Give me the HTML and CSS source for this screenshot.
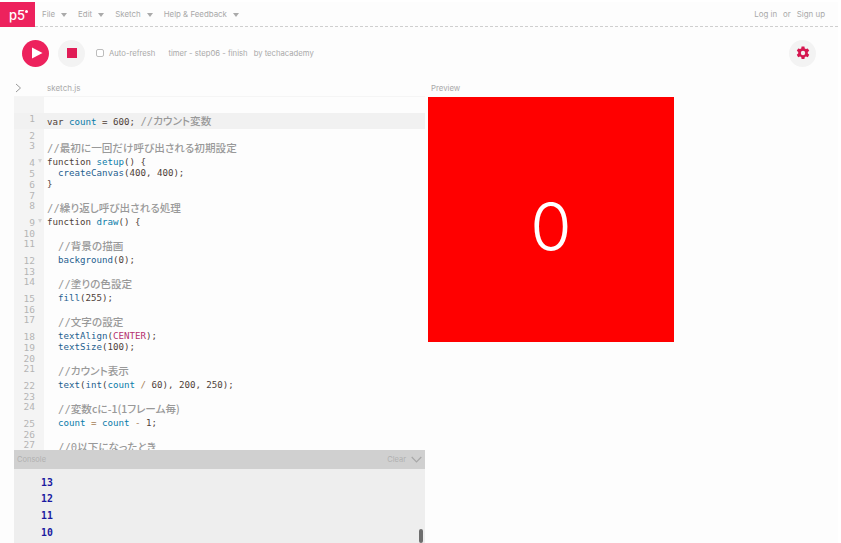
FILE: index.html
```html
<!DOCTYPE html>
<html lang="ja">
<head>
<meta charset="utf-8">
<title>p5.js Web Editor</title>
<link rel="stylesheet" href="styles.css">
</head>
<body>
<div class="page">
  <header class="nav">
    <div class="logo">p5<span class="logo-star"></span></div>
    <ul class="menu">
      <li class="menu-item">File<span class="caret"></span></li>
      <li class="menu-item">Edit<span class="caret"></span></li>
      <li class="menu-item">Sketch<span class="caret"></span></li>
      <li class="menu-item">Help &amp; Feedback<span class="caret"></span></li>
    </ul>
    <div class="auth"><span>Log in</span><span>or</span><span>Sign up</span></div>
  </header>

  <section class="toolbar">
    <button class="play" aria-label="Play">
      <svg width="12" height="12" viewBox="0 0 12 12"><path d="M1 .5 11.500 6 1 11.500z" fill="#fff"/></svg>
    </button>
    <button class="stop" aria-label="Stop"><span class="stop-mark"></span></button>
    <label class="auto"><span class="check"></span>Auto-refresh</label>
    <span class="sketch-name">timer - step06 - finish</span>
    <span class="owner">by techacademy</span>
    <button class="settings" aria-label="Settings">
      <svg width="14" height="14" viewBox="0 0 14 14"><path d="M5.600.6h2.800l.4 1.900 1.200.6 1.800-.7 1.400 2.400-1.400 1.300v1.400l1.400 1.300-1.400 2.400-1.800-.7-1.200.6-.4 1.900H5.600l-.4-1.900-1.200-.6-1.800.7L.8 8.800l1.400-1.300V6.100L.8 4.800l1.400-2.400 1.800.7 1.200-.6z" fill="#d5164f"/><circle cx="7" cy="7" r="2.200" fill="#f3f3f3"/></svg>
    </button>
  </section>

  <main class="main">
    <div class="editor-col">
      <div class="tabs">
        <svg class="expand" width="7" height="10" viewBox="0 0 7 10"><path d="M1 1l4.500 4L1 9" fill="none" stroke="#9a9a9a" stroke-width="1"/></svg>
        <span class="file-name">sketch.js</span>
      </div>
      <div class="code-wrap">
        <div class="code">
          <div class="row tall active"><span class="num">1</span><code class="src">var <i class="v">count</i> = 600; <i class="c">//カウント変数</i></code></div>
          <div class="row"><span class="num">2</span><code class="src"></code></div>
          <div class="row tall"><span class="num">3</span><code class="src"><i class="c">//最初に一回だけ呼び出される初期設定</i></code></div>
          <div class="row"><span class="num fold">4</span><code class="src">function <i class="v">setup</i>() {</code></div>
          <div class="row"><span class="num">5</span><code class="src">  <i class="f">createCanvas</i>(400, 400);</code></div>
          <div class="row"><span class="num">6</span><code class="src">}</code></div>
          <div class="row"><span class="num">7</span><code class="src"></code></div>
          <div class="row tall"><span class="num">8</span><code class="src"><i class="c">//繰り返し呼び出される処理</i></code></div>
          <div class="row"><span class="num fold">9</span><code class="src">function <i class="v">draw</i>() {</code></div>
          <div class="row"><span class="num">10</span><code class="src"></code></div>
          <div class="row tall"><span class="num">11</span><code class="src">  <i class="c">//背景の描画</i></code></div>
          <div class="row"><span class="num">12</span><code class="src">  <i class="f">background</i>(0);</code></div>
          <div class="row"><span class="num">13</span><code class="src"></code></div>
          <div class="row tall"><span class="num">14</span><code class="src">  <i class="c">//塗りの色設定</i></code></div>
          <div class="row"><span class="num">15</span><code class="src">  <i class="f">fill</i>(255);</code></div>
          <div class="row"><span class="num">16</span><code class="src"></code></div>
          <div class="row tall"><span class="num">17</span><code class="src">  <i class="c">//文字の設定</i></code></div>
          <div class="row"><span class="num">18</span><code class="src">  <i class="f">textAlign</i>(<i class="k">CENTER</i>);</code></div>
          <div class="row"><span class="num">19</span><code class="src">  <i class="f">textSize</i>(100);</code></div>
          <div class="row"><span class="num">20</span><code class="src"></code></div>
          <div class="row tall"><span class="num">21</span><code class="src">  <i class="c">//カウント表示</i></code></div>
          <div class="row"><span class="num">22</span><code class="src">  <i class="f">text</i>(<i class="f">int</i>(<i class="v">count</i> <i class="o">/</i> 60), 200, 250);</code></div>
          <div class="row"><span class="num">23</span><code class="src"></code></div>
          <div class="row tall"><span class="num">24</span><code class="src">  <i class="c">//<i class="prop">変数cに-1(1フレーム毎)</i></i></code></div>
          <div class="row"><span class="num">25</span><code class="src">  <i class="v">count</i> <i class="o">=</i> <i class="v">count</i> <i class="o">-</i> 1;</code></div>
          <div class="row"><span class="num">26</span><code class="src"></code></div>
          <div class="row tall"><span class="num">27</span><code class="src">  <i class="c">//0以下になったとき</i></code></div>
        </div>
      </div>
      <div class="console">
        <div class="console-head">
          <span>Console</span>
          <span class="console-actions">Clear
            <svg width="11" height="7" viewBox="0 0 11 7"><path d="M.7 1l4.800 4.800L10.300 1" fill="none" stroke="#a8a8a8" stroke-width="1.200"/></svg>
          </span>
        </div>
        <div class="console-body">
          <div class="log-list">
            <div class="log">14</div>
            <div class="log">13</div>
            <div class="log">12</div>
            <div class="log">11</div>
            <div class="log">10</div>
          </div>
          <span class="scroll-thumb"></span>
        </div>
      </div>
    </div>
    <div class="preview-col">
      <div class="preview-label">Preview</div>
      <div class="canvas">0</div>
    </div>
  </main>
</div>
</body>
</html>
```

FILE: styles.css
```css
* { box-sizing: border-box; }
html, body { margin: 0; height: 100%; overflow: hidden; }
body { background: #fff; font-family: "Inter", "Noto Sans", sans-serif; color: #a9a9a9; }
.page { width: 838px; height: 541px; margin-top: 2px; background: #fdfdfd; display: flex; flex-direction: column; overflow: hidden; }
button { border: 0; padding: 0; cursor: pointer; }

.nav { height: 25px; flex: none; display: flex; align-items: center; border-bottom: 1px dashed #cfcfcf; font-size: 7.900px; }
.logo { width: 35px; height: 25px; background: #ed225d; color: #fff; font-size: 13px; font-weight: 500; padding-left: 9px; line-height: 27px; flex: none; position: relative; }
.logo-star { position: absolute; left: 25px; top: 8px; width: 3px; height: 3px; border-radius: 50%; background: #fff; }
.menu { list-style: none; display: flex; margin: 0 0 0 7px; padding: 0; gap: 11px; flex: 1; }
.menu-item { display: flex; align-items: center; gap: 6px; }
.caret { width: 0; height: 0; border-left: 3px solid transparent; border-right: 3px solid transparent; border-top: 4px solid #aaa; margin-top: 1px; }
.auth { display: flex; gap: 6px; padding-right: 13px; }

.toolbar { height: 52px; flex: none; display: flex; align-items: center; padding: 0 22px; font-size: 7.700px; }
.play { width: 27px; height: 27px; border-radius: 50%; background: #ed225d; display: flex; align-items: center; justify-content: center; padding-left: 2px; }
.stop { width: 27px; height: 27px; border-radius: 50%; background: #f3f3f3; display: flex; align-items: center; justify-content: center; margin-left: 9px; }
.stop-mark { width: 10px; height: 10px; background: #e01c56; }
.auto { display: flex; align-items: center; gap: 5px; margin-left: 11px; }
.check { width: 8px; height: 8px; border: 1px solid #bdbdbd; border-radius: 2px; background: #fff; }
.sketch-name { margin-left: 13px; }
.owner { margin-left: 6px; }
.settings { width: 27px; height: 27px; border-radius: 50%; background: #f3f3f3; display: flex; align-items: center; justify-content: center; margin-left: auto; }

.main { flex: 1; min-height: 0; display: flex; }
.editor-col { width: 425px; flex: none; display: flex; flex-direction: column; padding-left: 14px; }
.tabs { height: 18px; flex: none; display: flex; align-items: center; border-bottom: 1px solid #f5f5f5; font-size: 8px; }
.expand { margin-left: 1px; }
.file-name { margin-left: 25px; }
.code-wrap { height: 353px; flex: none; overflow: hidden; background: linear-gradient(90deg, #f4f4f4 30px, #fdfdfd 30px); padding-top: 16px; }
.row { display: flex; height: 11px; font: 9.150px/11px "DejaVu Sans Mono", monospace; color: #4f3f38; }
.row.tall { height: 16px; line-height: 16px; }
.row.active { background: #f1f1f1; }
.num { width: 33px; flex: none; padding-top: 1px; padding-right: 12px; text-align: right; color: #b4b4b4; font-size: 9.500px; line-height: 11px; position: relative; }
.tall .num { padding-top: 0; }
.fold::after { content: ""; position: absolute; left: 24px; top: 3px; border-left: 2.500px solid transparent; border-right: 2.500px solid transparent; border-top: 4px solid #d5d5d5; }
.src { font: inherit; white-space: pre; padding-top: 1px; }
.tall .src { padding-top: 0; }
.src i { font-style: normal; }
.v { color: #0b7ca9; }
.f { color: #1f5f8f; }
.k { color: #b5316e; }
.o { color: #a67f59; }
.c { color: #999999; font-family: "DejaVu Sans Mono", "Noto Sans CJK JP", monospace; font-size: 10.600px; font-weight: 500; font-feature-settings: "palt"; }
.prop { font-family: "Noto Sans CJK JP", sans-serif; }

.console { flex: 1; min-height: 0; display: flex; flex-direction: column; }
.console-head { height: 19px; flex: none; background: #d0d0d0; display: flex; justify-content: space-between; align-items: center; padding: 0 3px; font-size: 7.500px; color: #b0b0b0; }
.console-actions { display: flex; align-items: center; gap: 5px; }
.console-body { flex: 1; min-height: 0; background: #eeeeee; position: relative; overflow: hidden; }
.log-list { margin-top: -11px; }
.log { height: 16.700px; padding-left: 27px; font: bold 9.800px/16.700px "DejaVu Sans Mono", monospace; color: #1a1aa0; }
.scroll-thumb { position: absolute; right: 2px; bottom: 0; width: 4px; height: 14px; border-radius: 2px; background: #6e6e6e; }

.preview-col { flex: 1; padding-left: 3px; display: flex; flex-direction: column; }
.preview-label { height: 18px; padding: 2px 0 0 3px; font-size: 7.800px; line-height: 14px; }
.canvas { width: 246px; height: 245px; background: #ff0000; color: #fff; font: 300 67px/231px "Inter", sans-serif; text-align: center; padding-top: 14px; }
```
